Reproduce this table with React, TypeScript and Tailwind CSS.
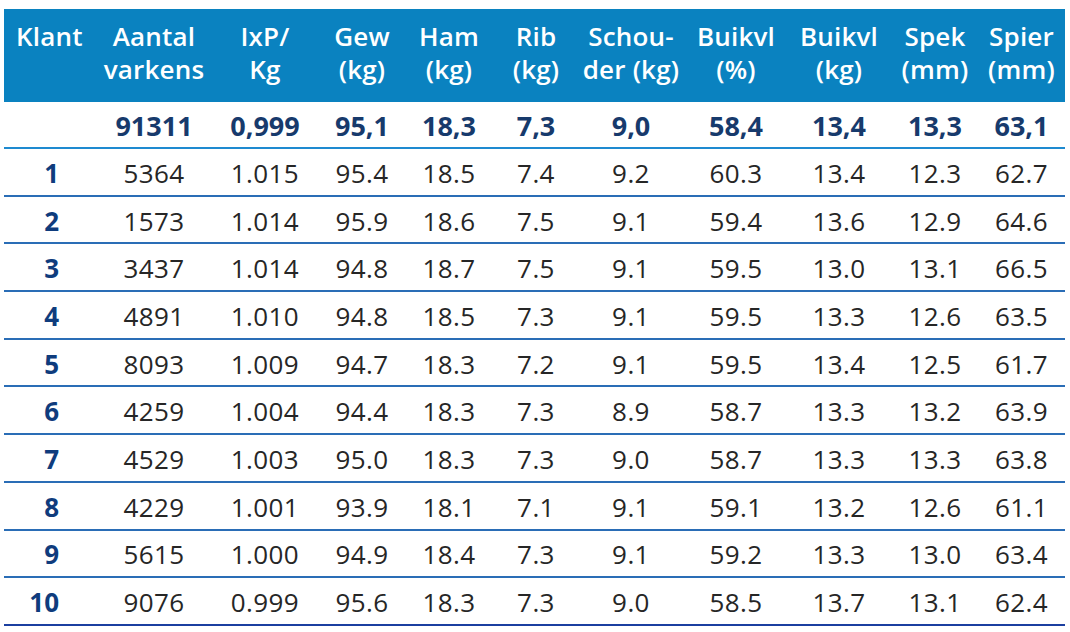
const cols = [
  { w: 'w-[96px]', head: ['Klant', ''] },
  { w: 'w-[108px]', head: ['Aantal', 'varkens'] },
  { w: 'w-[114px]', head: ['IxP/', 'Kg'] },
  { w: 'w-[80px]', head: ['Gew', '(kg)'] },
  { w: 'w-[94px]', head: ['Ham', '(kg)'] },
  { w: 'w-[80px]', head: ['Rib', '(kg)'] },
  { w: 'w-[110px]', head: ['Schou-', 'der (kg)'] },
  { w: 'w-[100px]', head: ['Buikvl', '(%)'] },
  { w: 'w-[106px]', head: ['Buikvl', '(kg)'] },
  { w: 'w-[86px]', head: ['Spek', '(mm)'] },
  { w: 'w-[87px]', head: ['Spier', '(mm)'] },
];

const totals = ['', '91311', '0,999', '95,1', '18,3', '7,3', '9,0', '58,4', '13,4', '13,3', '63,1'];

const rows = [
  ['1', '5364', '1.015', '95.4', '18.5', '7.4', '9.2', '60.3', '13.4', '12.3', '62.7'],
  ['2', '1573', '1.014', '95.9', '18.6', '7.5', '9.1', '59.4', '13.6', '12.9', '64.6'],
  ['3', '3437', '1.014', '94.8', '18.7', '7.5', '9.1', '59.5', '13.0', '13.1', '66.5'],
  ['4', '4891', '1.010', '94.8', '18.5', '7.3', '9.1', '59.5', '13.3', '12.6', '63.5'],
  ['5', '8093', '1.009', '94.7', '18.3', '7.2', '9.1', '59.5', '13.4', '12.5', '61.7'],
  ['6', '4259', '1.004', '94.4', '18.3', '7.3', '8.9', '58.7', '13.3', '13.2', '63.9'],
  ['7', '4529', '1.003', '95.0', '18.3', '7.3', '9.0', '58.7', '13.3', '13.3', '63.8'],
  ['8', '4229', '1.001', '93.9', '18.1', '7.1', '9.1', '59.1', '13.2', '12.6', '61.1'],
  ['9', '5615', '1.000', '94.9', '18.4', '7.3', '9.1', '59.2', '13.3', '13.0', '63.4'],
  ['10', '9076', '0.999', '95.6', '18.3', '7.3', '9.0', '58.5', '13.7', '13.1', '62.4'],
];

export default function App() {
  return (
    <div className="min-h-screen bg-white pt-[9px] pl-[4px] font-['Open_Sans',sans-serif]">
      <div className="w-[1061px]">
        {/* header */}
        <div className="flex h-[93px] items-start bg-[#0a82c0] pt-[11px] text-white">
          {cols.map((c, i) => (
            <div
              key={i}
              className={`${c.w} flex flex-col text-[26px] font-semibold leading-[33px] tracking-[0.2px] ${i === 0 ? 'items-start pl-[12px]' : 'items-center'}`}
            >
              <span className="whitespace-nowrap">{c.head[0]}</span>
              {c.head[1] && <span className="whitespace-nowrap">{c.head[1]}</span>}
            </div>
          ))}
        </div>

        {/* totals */}
        <div className="flex h-[47px] items-center border-b-2 border-[#1e8ad0] pt-[3px] text-[27px] font-bold text-[#173a6c]">
          {totals.map((t, i) => (
            <div key={i} className={`${cols[i].w} text-center`}>
              {t}
            </div>
          ))}
        </div>

        {rows.map((r, ri) => (
          <div
            key={ri}
            className={`flex h-[47.7px] items-center border-b-2 pt-[3px] text-[26px] text-[#262626] ${ri === rows.length - 1 ? 'border-[#1b3fa0]' : 'border-[#2a6db6]'}`}
          >
            {r.map((v, i) => (
              <div
                key={i}
                className={
                  i === 0
                    ? `${cols[i].w} pr-[41px] text-right font-bold text-[#0f3c7d]`
                    : `${cols[i].w} text-center tracking-[0.4px]`
                }
              >
                {v}
              </div>
            ))}
          </div>
        ))}
      </div>
    </div>
  );
}
